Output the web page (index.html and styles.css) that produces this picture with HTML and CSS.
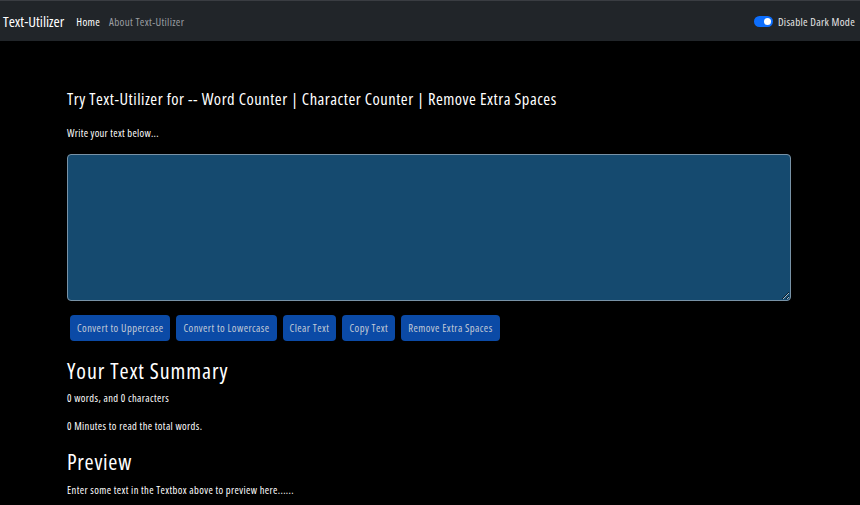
FILE: index.html
```html
<!DOCTYPE html>
<html lang="en">
<head>
<meta charset="utf-8">
<title>Text-Utilizer</title>
<link rel="stylesheet" href="styles.css">
</head>
<body>
<nav class="navbar">
  <div class="nav-left">
    <a class="brand" href="#">Text-Utilizer</a>
    <a class="nav-link active" href="#">Home</a>
    <a class="nav-link" href="#">About Text-Utilizer</a>
  </div>
  <label class="switch-wrap">
    <span class="switch"><span class="knob"></span></span>
    <span class="switch-label">Disable Dark Mode</span>
  </label>
</nav>
<main class="container">
  <h1 class="title">Try Text-Utilizer for -- Word Counter | Character Counter | Remove Extra Spaces</h1>
  <p class="label">Write your text below...</p>
  <textarea class="textbox"></textarea>
  <div class="buttons">
    <button class="btn">Convert to Uppercase</button>
    <button class="btn">Convert to Lowercase</button>
    <button class="btn">Clear Text</button>
    <button class="btn">Copy Text</button>
    <button class="btn">Remove Extra Spaces</button>
  </div>
  <h2 class="section">Your Text Summary</h2>
  <p class="small">0 words, and 0 characters</p>
  <p class="small">0 Minutes to read the total words.</p>
  <h2 class="section section-preview">Preview</h2>
  <p class="small">Enter some text in the Textbox above to preview here......</p>
</main>
</body>
</html>
```
FILE: styles.css
```css
* { box-sizing: border-box; }
html, body { margin: 0; padding: 0; }
body {
  background: #000;
  color: #fff;
  font-family: "Open Sans", Lato, sans-serif;
  font-stretch: 75%;
  width: 860px;
  height: 505px;
  overflow: hidden;
}
.navbar {
  height: 41px;
  background: #212529;
  border-top: 1px solid #3a3d42;
  display: flex;
  align-items: center;
  justify-content: space-between;
  padding: 0 5px 0 3px;
}
.nav-left { display: flex; align-items: center; }
.brand {
  color: #fff;
  text-decoration: none;
  font-size: 15px;
  margin-right: 12px;
}
.nav-link {
  color: #9a9da1;
  text-decoration: none;
  font-size: 11px;
  margin-right: 9px;
  letter-spacing: 0.3px;
}
.nav-link.active { color: #fff; }
.switch-wrap { display: flex; align-items: center; gap: 5px; }
.switch {
  width: 19px;
  height: 11px;
  border-radius: 6px;
  background: #0d6efd;
  display: flex;
  align-items: center;
  justify-content: flex-end;
  padding-right: 2px;
}
.knob { width: 7px; height: 7px; border-radius: 50%; background: #fff; }
.switch-label { font-size: 11px; color: #e6e6e6; letter-spacing: 0.3px; }
.container {
  width: 724px;
  margin-left: 67px;
  padding-top: 48px;
}
.title {
  font-size: 16.5px;
  font-weight: 500;
  margin: 0 0 17px;
  line-height: 20px;
  letter-spacing: 0.5px;
}
.label {
  font-size: 10.5px;
  margin: 0 0 14px;
  line-height: 14px;
  letter-spacing: 0.3px;
}
.textbox {
  display: block;
  width: 724px;
  height: 147px;
  background: #154a6f;
  border: 1px solid #7892a6;
  border-radius: 4px;
  color: #fff;
  resize: vertical;
  margin: 0;
}
.buttons {
  display: flex;
  gap: 6px;
  margin: 14px 0 0 3px;
}
.btn {
  background: #0b4aa6;
  color: #c3cad6;
  border: none;
  border-radius: 4px;
  height: 26px;
  padding: 0 7px;
  font-family: "Open Sans", Lato, sans-serif;
  font-stretch: 75%;
  font-weight: 400;
  font-size: 10.5px;
  letter-spacing: 0.45px;
}
.section {
  font-size: 22px;
  font-weight: 400;
  margin: 15px 0 7px;
  line-height: 28px;
  letter-spacing: 0.9px;
}
.section-preview { margin: 7px 0 8px; letter-spacing: 0.7px; }
.small {
  font-size: 10.5px;
  line-height: 14px;
  margin: 0 0 14px;
  letter-spacing: 0.38px;
}
```
